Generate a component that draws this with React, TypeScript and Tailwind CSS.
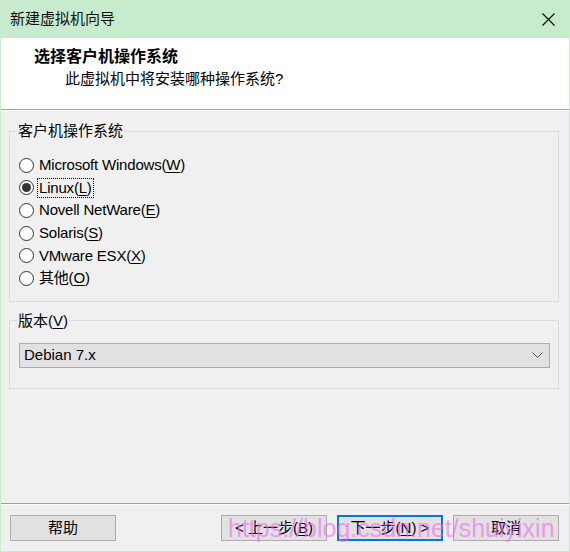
import React from "react";

const font = { fontFamily: "'Liberation Sans','Noto Sans CJK SC',sans-serif" };

function Radio({ label, mn, checked, focus }: { label: string; mn: string; checked?: boolean; focus?: boolean }) {
  return (
    <div className="flex items-center h-[22.6px]">
      <span className="ml-[9px] w-[15px] h-[15px] rounded-full border border-[#333333] bg-white flex items-center justify-center shrink-0">
        {checked && <span className="w-[9px] h-[9px] rounded-full bg-[#333333]" />}
      </span>
      <span
        className={
          "ml-[3px] text-[15px] tracking-[-0.2px] leading-[18px] text-black px-[1px] " +
          (focus ? "border border-dotted border-black" : "border border-transparent")
        }
      >
        {label}(<span className="underline underline-offset-2">{mn}</span>)
      </span>
    </div>
  );
}

function Btn({ children, primary }: { children: React.ReactNode; primary?: boolean }) {
  return (
    <div
      className={
        "w-[106px] h-[26px] bg-[#e1e1e1] flex items-center justify-center text-[15px] text-black " +
        (primary ? "border-2 border-[#0078d7]" : "border border-[#adadad]")
      }
    >
      {children}
    </div>
  );
}

export default function App() {
  return (
    <div
      style={font}
      className="relative w-[570px] h-[552px] bg-[#f0f0f0] flex flex-col border-l border-r border-b border-[#c7ebcc] overflow-hidden"
    >
      {/* Title bar */}
      <div className="h-[38px] bg-[#c7ebcc] flex items-center justify-between shrink-0 -mx-[1px] px-[10px]">
        <span className="text-[15px] text-[#111]">新建虚拟机向导</span>
        <svg width="13" height="13" viewBox="0 0 13 13" className="mr-[5px]">
          <path d="M0.5 0.5 L12.5 12.5 M12.5 0.5 L0.5 12.5" stroke="#000" strokeWidth="1.1" fill="none" />
        </svg>
      </div>

      {/* Header */}
      <div className="h-[71px] bg-white shrink-0 flex flex-col">
        <div className="ml-[33px] mt-[9px] text-[16px] font-bold leading-[20px] text-black">选择客户机操作系统</div>
        <div className="ml-[64px] mt-[2px] text-[15px] leading-[20px] text-black">此虚拟机中将安装哪种操作系统?</div>
      </div>
      <div className="h-[1px] bg-[#a0a0a0] shrink-0" />
      <div className="h-[1px] bg-white shrink-0" />

      {/* Body */}
      <div className="flex-1 flex flex-col">
        <fieldset className="ml-[8px] mr-[10px] mt-[10px] border border-[#dcdcdc] pb-[11px]">
          <legend className="ml-[7px] px-[1px] text-[15px] leading-[20px] text-black">客户机操作系统</legend>
          <div className="pt-[13px] flex flex-col">
            <Radio label="Microsoft Windows" mn="W" />
            <Radio label="Linux" mn="L" checked focus />
            <Radio label="Novell NetWare" mn="E" />
            <Radio label="Solaris" mn="S" />
            <Radio label="VMware ESX" mn="X" />
            <Radio label="其他" mn="O" />
          </div>
        </fieldset>

        <fieldset className="ml-[8px] mr-[10px] mt-[9px] border border-[#dcdcdc] pb-[20px]">
          <legend className="ml-[7px] px-[1px] text-[15px] leading-[20px] text-black">
            版本(<span className="underline underline-offset-2">V</span>)
          </legend>
          <div className="mt-[12px] ml-[9px] mr-[8px] h-[25px] bg-[#e1e1e1] border border-[#adadad] flex items-center justify-between">
            <span className="ml-[4px] text-[15px] text-black">Debian 7.x</span>
            <svg width="11" height="6" viewBox="0 0 11 6" className="mr-[6px]">
              <path d="M0.5 0.5 L5.5 5.5 L10.5 0.5" stroke="#555" strokeWidth="1" fill="none" />
            </svg>
          </div>
        </fieldset>
      </div>

      {/* Footer */}
      <div className="h-[1px] bg-[#a0a0a0] shrink-0" />
      <div className="h-[1px] bg-white shrink-0" />
      <div className="shrink-0 flex items-center pl-[9px] pr-[10px] pt-[10px] pb-[10px]">
        <Btn>帮助</Btn>
        <div className="flex-1" />
        <div className="flex gap-[10px]">
          <Btn>
            &lt; 上一步(<span className="underline underline-offset-2">B</span>)
          </Btn>
          <Btn primary>
            下一步(<span className="underline underline-offset-2">N</span>) &gt;
          </Btn>
          <Btn>取消</Btn>
        </div>
      </div>

      {/* Watermark */}
      <div
        className="absolute left-[227px] top-[514px] text-[25px] leading-[28px] text-[#ee6aee] opacity-60 whitespace-nowrap pointer-events-none"
        style={{ fontFamily: "'Liberation Sans',sans-serif" }}
      >
        https://blog.csdn.net/shuiyixin
      </div>
    </div>
  );
}
